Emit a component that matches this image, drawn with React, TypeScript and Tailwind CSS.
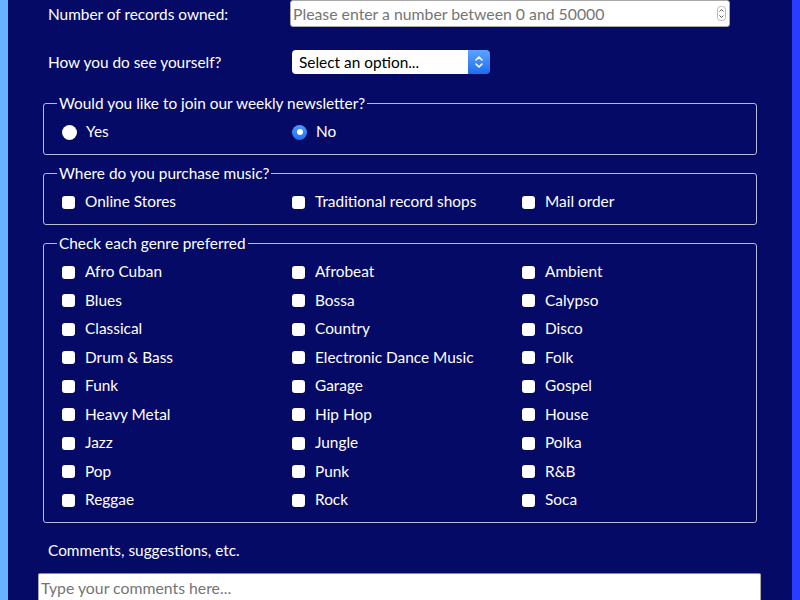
import { ReactNode } from "react";

const genres = [
  "Afro Cuban", "Afrobeat", "Ambient",
  "Blues", "Bossa", "Calypso",
  "Classical", "Country", "Disco",
  "Drum & Bass", "Electronic Dance Music", "Folk",
  "Funk", "Garage", "Gospel",
  "Heavy Metal", "Hip Hop", "House",
  "Jazz", "Jungle", "Polka",
  "Pop", "Punk", "R&B",
  "Reggae", "Rock", "Soca",
];

const shops = ["Online Stores", "Traditional record shops", "Mail order"];

const Box = ({ label }: { label: string }) => (
  <label className="flex items-center h-5 pl-[5px]">
    <span className="w-[13px] h-[13px] rounded-[3px] bg-white shadow-[0_0_1px_rgba(0,0,0,0.6)] shrink-0" />
    <span className="ml-[10px] whitespace-nowrap">{label}</span>
  </label>
);

const Radio = ({ label, checked }: { label: string; checked?: boolean }) => (
  <label className="flex items-center h-5 pl-[5px]">
    {checked ? (
      <span className="w-[15px] h-[15px] rounded-full bg-gradient-to-b from-[#4f9bff] to-[#1f6ff0] flex items-center justify-center shrink-0">
        <span className="w-[6px] h-[6px] rounded-full bg-white" />
      </span>
    ) : (
      <span className="w-[15px] h-[15px] rounded-full bg-white shadow-[0_0_1px_rgba(0,0,0,0.6)] shrink-0" />
    )}
    <span className="ml-[9px]">{label}</span>
  </label>
);

const Fieldset = ({ legend, children }: { legend: string; children: ReactNode }) => (
  <fieldset className="min-w-0 border border-[#b9bcd6] rounded-[3px] px-[13px] pt-[9px] pb-[12px]">
    <legend className="px-[2px] leading-5">{legend}</legend>
    {children}
  </fieldset>
);

export default function App() {
  return (
    <div
      className="min-h-screen px-2 bg-gradient-to-r from-[#66b2ff] to-[#2a3cff] text-white text-[15.4px]"
      style={{ fontFamily: "Lato, 'Noto Sans', sans-serif" }}
    >
      <div className="bg-[#050a66] min-h-screen px-[35px]">
        <div className="flex items-center pl-[5px]">
          <span className="w-[242px] leading-5">Number of records owned:</span>
          <div className="w-[440px] h-[27px] bg-white border border-[#a9a9a9] rounded-[3px] flex items-center pl-[2px] pr-[3px]">
            <span className="flex-1 text-[#757575] text-[15.8px]">Please enter a number between 0 and 50000</span>
            <svg width="9" height="15" viewBox="0 0 9 15">
              <rect x="0.5" y="0.5" width="8" height="14" rx="3" fill="#fff" stroke="#bbb" />
              <path d="M2.5 5.5 L4.5 3.5 L6.5 5.5" fill="none" stroke="#555" strokeWidth="1" />
              <path d="M2.5 9.5 L4.5 11.5 L6.5 9.5" fill="none" stroke="#555" strokeWidth="1" />
            </svg>
          </div>
        </div>

        <div className="flex items-center pl-[5px] mt-[23px]">
          <span className="w-[244px] leading-5">How you do see yourself?</span>
          <div className="w-[198px] h-6 flex rounded-[4px] overflow-hidden">
            <span className="flex-1 bg-white text-black pl-[7px] leading-6">Select an option...</span>
            <span className="w-[22px] bg-gradient-to-b from-[#5aa4ff] to-[#1e6cf0] flex items-center justify-center">
              <svg width="10" height="14" viewBox="0 0 10 14">
                <path d="M2 5 L5 2 L8 5" fill="none" stroke="#fff" strokeWidth="1.6" strokeLinecap="round" strokeLinejoin="round" />
                <path d="M2 9 L5 12 L8 9" fill="none" stroke="#fff" strokeWidth="1.6" strokeLinecap="round" strokeLinejoin="round" />
              </svg>
            </span>
          </div>
        </div>

        <div className="mt-[19px] flex flex-col gap-[8px]">
          <Fieldset legend="Would you like to join our weekly newsletter?">
            <div className="grid grid-cols-[230px_230px_1fr]">
              <Radio label="Yes" />
              <Radio label="No" checked />
            </div>
          </Fieldset>

          <Fieldset legend="Where do you purchase music?">
            <div className="grid grid-cols-[230px_230px_1fr]">
              {shops.map((s) => (
                <Box key={s} label={s} />
              ))}
            </div>
          </Fieldset>

          <Fieldset legend="Check each genre preferred">
            <div className="grid grid-cols-[230px_230px_1fr] gap-y-[8.5px]">
              {genres.map((g) => (
                <Box key={g} label={g} />
              ))}
            </div>
          </Fieldset>
        </div>

        <p className="pl-[5px] mt-[17px] leading-5">Comments, suggestions, etc.</p>
        <div className="mt-[13px] -mx-[5px] mr-[-4px] h-[60px] bg-white border border-[#a9a9a9] border-t-[#8a8a8a] rounded-[2px] px-[2px] pt-[2px] text-[#757575] text-[15.8px] leading-6">
          Type your comments here...
        </div>
      </div>
    </div>
  );
}
